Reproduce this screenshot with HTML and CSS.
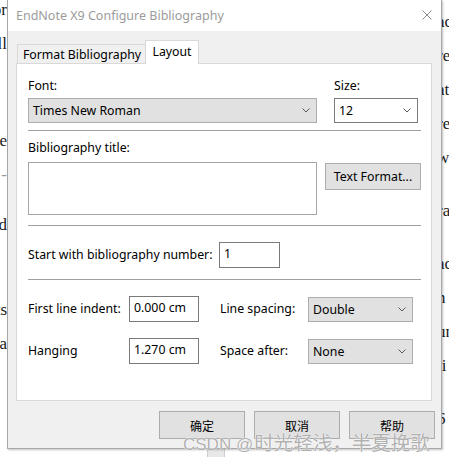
FILE: index.html
```html
<!DOCTYPE html>
<html>
<head>
<meta charset="utf-8">
<title>EndNote X9 Configure Bibliography</title>
<link rel="stylesheet" href="styles.css">
</head>
<body>
<div class="desk">
  <div class="doc-left">
    <div class="ln first-l">for</div>
    <div class="ln">all</div>
    <div class="ln gap-l">the</div>
    <div class="ln dim">-</div>
    <div class="ln gap-s">and</div>
    <div class="ln gap-m">its</div>
    <div class="ln">na</div>
  </div>
  <div class="doc-mid"><div class="scrollbit"></div></div>
  <div class="doc-right">
    <div class="ln first-r">acc</div>
    <div class="ln">re</div>
    <div class="ln">ate</div>
    <div class="ln">re</div>
    <div class="ln">we</div>
    <div class="ln gap">ra</div>
    <div class="ln gap">ac</div>
    <div class="ln">n</div>
    <div class="ln">un</div>
    <div class="ln">ti</div>
    <div class="ln gap">6</div>
  </div>
</div>

<div class="dialog">
  <div class="titlebar">
    <span class="title">EndNote X9 Configure Bibliography</span>
    <svg class="close" width="10" height="10" viewBox="0 0 10 10"><path d="M0.5 0.5 L9.5 9.5 M9.5 0.5 L0.5 9.5"/></svg>
  </div>
  <div class="dbody">
    <div class="tabs">
      <div class="tab">Format Bibliography</div>
      <div class="tab active">Layout</div>
    </div>
    <div class="panel">
      <div class="font-row">
        <div class="lbl">Font:</div>
        <div class="lbl">Size:</div>
        <div class="combo gray">Times New Roman<svg class="chev" width="8" height="5" viewBox="0 0 8 5"><path d="M0.5 0.5 L4 4 L7.5 0.5"/></svg></div>
        <div class="combo white">12<svg class="chev" width="8" height="5" viewBox="0 0 8 5"><path d="M0.5 0.5 L4 4 L7.5 0.5"/></svg></div>
      </div>
      <div class="sep"></div>
      <div class="lbl title-lbl">Bibliography title:</div>
      <div class="title-row">
        <div class="textarea"></div>
        <div class="btn fmt">Text Format...</div>
      </div>
      <div class="sep sep2"></div>
      <div class="start-row">
        <div class="lbl">Start with bibliography number:</div>
        <div class="input num">1</div>
      </div>
      <div class="sep sep3"></div>
      <div class="grid-rows">
        <div class="lbl">First line indent:</div>
        <div class="input">0.000 cm</div>
        <div></div>
        <div class="lbl">Line spacing:</div>
        <div class="combo gray">Double<svg class="chev" width="8" height="5" viewBox="0 0 8 5"><path d="M0.5 0.5 L4 4 L7.5 0.5"/></svg></div>
        <div class="lbl">Hanging</div>
        <div class="input">1.270 cm</div>
        <div></div>
        <div class="lbl">Space after:</div>
        <div class="combo gray">None<svg class="chev" width="8" height="5" viewBox="0 0 8 5"><path d="M0.5 0.5 L4 4 L7.5 0.5"/></svg></div>
      </div>
    </div>
    <div class="buttons">
      <div class="btn dlg">确定</div>
      <div class="btn dlg">取消</div>
      <div class="btn dlg">帮助</div>
    </div>
  </div>
</div>

<div class="watermark">CSDN @<span class="wm-cjk">时光轻浅，半夏挽歌</span></div>
</body>
</html>
```

FILE: styles.css
```css
* { box-sizing: border-box; }
html, body { margin: 0; padding: 0; }
body {
  width: 449px;
  height: 457px;
  overflow: hidden;
  position: relative;
  background: #fff;
  font-family: "Noto Sans", "Noto Sans CJK SC", sans-serif;
  font-size: 12.3px;
  color: #000;
}

/* background document */
.desk {
  display: flex;
  height: 457px;
  font-family: "Liberation Serif", "Noto Sans CJK SC", serif;
  font-size: 17px;
  color: #1a1a1a;
}
.doc-left {
  width: 7px;
  overflow: hidden;
  display: flex;
  flex-direction: column;
  align-items: flex-end;
}
.doc-right {
  width: 12px;
  overflow: hidden;
  display: flex;
  flex-direction: column;
}
.doc-mid {
  width: 430px;
  display: flex;
  align-items: flex-end;
}
.ln { height: 34px; line-height: 34px; white-space: nowrap; flex: none; }
.first-l { margin-top: -7px; }
.first-r { margin-top: 5px; }
.gap-l { margin-top: 63px; }
.gap-m { margin-top: 51px; }
.gap-s { margin-top: 16px; }
.gap { margin-top: 19px; }
.dim { color: #9a9a9a; }
.scrollbit {
  margin-left: 200px;
  width: 18px;
  height: 9px;
  background: #e8e8e8;
  border-left: 1px solid #d0d0d0;
  border-right: 1px solid #d0d0d0;
}

/* dialog window */
.dialog {
  position: absolute;
  left: 7px;
  top: 0;
  width: 435px;
  height: 449px;
  background: #f0f0f0;
  border: 1px solid #a8a8a8;
  border-top: none;
  box-shadow: 1px 1px 2px rgba(0,0,0,0.25);
  display: flex;
  flex-direction: column;
}
.titlebar {
  height: 31px;
  background: #fff;
  display: flex;
  align-items: center;
  padding-left: 8px;
  padding-right: 9px;
  flex: none;
}
.title {
  font-size: 12.5px;
  color: #9b9b9b;
  flex: 1;
  margin-top: -1px;
}
.close { stroke: #8a8a8a; stroke-width: 1; fill: none; margin-top: -1px; }

.dbody {
  flex: 1;
  padding: 9px 9px 0 8px;
  display: flex;
  flex-direction: column;
}
.tabs {
  display: flex;
  align-items: flex-end;
  height: 23px;
  position: relative;
  z-index: 1;
}
.tab {
  height: 19px;
  margin-left: 1px;
  width: 130px;
  background: #f0f0f0;
  border: 1px solid #d9d9d9;
  border-bottom: none;
  display: flex;
  align-items: center;
  justify-content: center;
  color: #000;
}
.tab.active {
  height: 24px;
  width: 54px;
  margin-left: -2px;
  margin-bottom: -1px;
  background: #fff;
  padding-bottom: 3px;
}
.panel {
  height: 338px;
  background: #fff;
  border: 1px solid #d9d9d9;
  padding: 14px 10px 0 11px;
  display: flex;
  flex-direction: column;
}
.lbl {
  height: 16px;
  line-height: 16px;
  white-space: nowrap;
}
.font-row {
  display: grid;
  grid-template-columns: 289px 84px;
  column-gap: 17px;
  row-gap: 4px;
}
.combo {
  height: 25px;
  display: flex;
  align-items: center;
  padding: 0 6px 0 4px;
  white-space: nowrap;
}
.combo.gray { background: #e1e1e1; border: 1px solid #adadad; }
.combo.white { background: #fff; border: 1px solid #7a7a7a; }
.chev { margin-left: auto; stroke: #5a5a5a; stroke-width: 1; fill: none; flex: none; }
.sep { height: 1px; background: #a0a0a0; margin-top: 7px; flex: none; }
.sep2 { margin-top: 10px; }
.sep3 { margin-top: 11px; }
.title-lbl { margin-top: 9px; }
.title-row {
  margin-top: 6px;
  display: grid;
  grid-template-columns: 289px 96px;
  column-gap: 8px;
  align-items: start;
}
.textarea { height: 53px; border: 1px solid #a6a6a6; background: #fff; }
.btn {
  background: #e1e1e1;
  border: 1px solid #adadad;
  display: flex;
  align-items: center;
  justify-content: center;
  white-space: nowrap;
}
.btn.fmt { height: 27px; margin-top: 1px; }
.start-row {
  margin-top: 16px;
  display: grid;
  grid-template-columns: 191px 61px;
  align-items: center;
}
.input {
  height: 26px;
  border: 1px solid #7a7a7a;
  background: #fff;
  padding: 3px 0 0 4px;
  line-height: 16px;
  white-space: nowrap;
}
.grid-rows {
  margin-top: 16px;
  display: grid;
  grid-template-columns: 101px 70px 21px 88px 105px;
  grid-auto-rows: 26px;
  row-gap: 16px;
  align-items: center;
}
.buttons {
  margin-top: 10px;
  margin-right: -3px;
  display: flex;
  justify-content: flex-end;
  gap: 9px;
}
.btn.dlg {
  width: 86px;
  height: 28px;
  font-family: "Noto Sans CJK SC", sans-serif;
  font-size: 12px;
}

.watermark {
  position: absolute;
  left: 183px;
  top: 427px;
  font-family: "Liberation Sans", "Noto Sans CJK SC", sans-serif;
  font-size: 17px;
  color: rgba(110,110,110,0.55);
  text-shadow: 0 0 1px #fff, 0 0 1px #fff;
  white-space: nowrap;
}
.wm-cjk {
  font-family: "Noto Sans CJK SC", sans-serif;
  font-size: 19.5px;
  margin-left: 1px;
}
```
